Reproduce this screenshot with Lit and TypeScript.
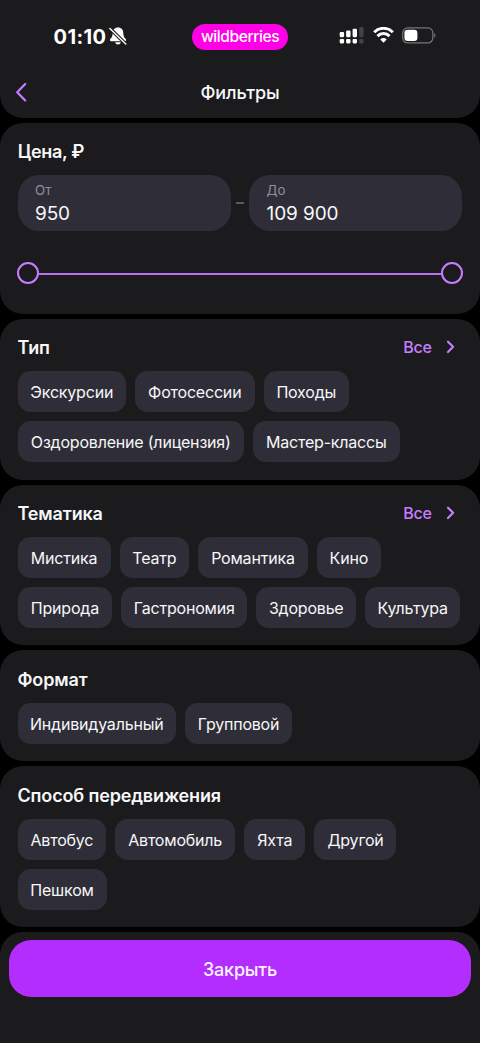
import { LitElement, html, css } from "lit";
import { customElement, property } from "lit/decorators.js";

interface Chip {
  label: string;
  width: number;
}

const chip = (label: string, width: number): Chip => ({ label, width });

const TYPES = [
  chip("Экскурсии", 108.5), chip("Фотосессии", 119.5), chip("Походы", 85.5),
  chip("Оздоровление (лицензия)", 226.5), chip("Мастер-классы", 146.5),
];
const THEMES = [
  chip("Мистика", 93), chip("Театр", 69.7), chip("Романтика", 109.5), chip("Кино", 64.3),
  chip("Природа", 94.7), chip("Гастрономия", 126), chip("Здоровье", 100), chip("Культура", 95),
];
const FORMATS = [chip("Индивидуальный", 158.5), chip("Групповой", 107)];
const TRANSPORT = [
  chip("Автобус", 88.8), chip("Автомобиль", 119.7), chip("Яхта", 61.5), chip("Другой", 82),
  chip("Пешком", 89),
];

@customElement("filter-group")
class FilterGroup extends LitElement {
  @property() heading = "";
  @property({ type: Boolean }) more = false;
  @property({ attribute: false }) chips: Chip[] = [];

  static styles = css`
    :host { display: block; box-sizing: border-box; background: #1b1b1d; border-radius: 23px; padding: 17.4px 12px 17.3px 17.5px; }
    .head { display: flex; justify-content: space-between; align-items: center; height: 24px; margin-bottom: 11.1px; }
    h2 { margin: 0; font-size: 18px; font-weight: 600; line-height: 24px; letter-spacing: -0.15px; white-space: nowrap; }
    .more { display: flex; align-items: center; gap: 14px; color: #c77dff; font-size: 16px; font-weight: 500; line-height: 24px; letter-spacing: -0.2px; margin: -2.2px 13.3px 0 0; }
    .more svg { display: block; }
    .chips { display: flex; flex-wrap: wrap; gap: 9px; }
    .chip { box-sizing: border-box; height: 41px; border-radius: 12.5px; background: #2f2e38; font-size: 16px; letter-spacing: -0.2px; line-height: 42px; white-space: nowrap; display: flex; justify-content: center; }
  `;

  render() {
    return html`
      <div class="head">
        <h2>${this.heading}</h2>
        ${this.more
          ? html`<span class="more">Все<svg width="9" height="14" viewBox="0 0 9 14"><path d="M2 1.7 7.1 6.8 2 12" fill="none" stroke="currentColor" stroke-width="2.2" stroke-linecap="round" stroke-linejoin="round"/></svg></span>`
          : null}
      </div>
      <div class="chips">
        ${this.chips.map((c) => html`<div class="chip" style="width:${c.width}px">${c.label}</div>`)}
      </div>
    `;
  }
}

@customElement("price-range")
class PriceRange extends LitElement {
  static styles = css`
    :host { display: block; box-sizing: border-box; height: 191.3px; background: #1b1b1d; border-radius: 23px; padding: 17.5px 17.7px 0; }
    h2 { margin: 0; font-size: 18px; font-weight: 600; line-height: 24px; letter-spacing: -0.3px; }
    .fields { display: flex; align-items: center; justify-content: space-between; margin-top: 11.2px; }
    .field { box-sizing: border-box; width: 213px; height: 55.7px; border-radius: 21px; background: #2f2e38; padding: 5.7px 17.3px 0; }
    .label { font-size: 13.3px; line-height: 18px; color: #8f8e99; }
    .value { font-size: 19px; line-height: 24px; margin-top: 3.4px; letter-spacing: -0.1px; }
    .dash { width: 8px; height: 1.5px; background: #59585f; }
    .slider { display: flex; align-items: center; margin: 31.2px -0.5px 0; }
    .knob { box-sizing: border-box; width: 22px; height: 22px; border: 2px solid #c77dff; border-radius: 50%; }
    .track { flex: 1; height: 2px; background: #b970ec; margin-top: 1px; }
  `;

  render() {
    return html`
      <h2>Цена, ₽</h2>
      <div class="fields">
        <div class="field"><div class="label">От</div><div class="value">950</div></div>
        <div class="dash"></div>
        <div class="field"><div class="label">До</div><div class="value">109 900</div></div>
      </div>
      <div class="slider"><div class="knob"></div><div class="track"></div><div class="knob"></div></div>
    `;
  }
}

@customElement("app-root")
class AppRoot extends LitElement {
  static styles = css`
    :host { display: flex; flex-direction: column; gap: 5px; width: 480px; height: 1043px; overflow: hidden; background: #000; color: #f7f7f9; font-family: Inter, "Liberation Sans", sans-serif; }
    svg { display: block; }
    header { box-sizing: border-box; height: 117.5px; background: #1b1b1d; border-radius: 0 0 23px 23px; flex: none; }
    .status { box-sizing: content-box; display: grid; grid-template-columns: 1fr 96px 1fr; align-items: center; height: 52px; padding-top: 11px; }
    .status > * { height: 26px; display: flex; align-items: center; }
    .clock { padding-left: 53.5px; gap: 3px; color: #fff; }
    .clock svg { margin-top: -2px; }
    .time { font-size: 20px; font-weight: 750; line-height: 24px; letter-spacing: 0.4px; margin-top: -1px; }
    .brand { justify-content: center; border-radius: 13px; background: #ff00e6; color: #fff; font-size: 15.6px; font-weight: 500; letter-spacing: -0.45px; line-height: 24px; }
    .system { justify-content: flex-end; padding-right: 44px; gap: 8.3px; margin-top: -4px; }
    .nav { display: grid; grid-template-columns: 1fr auto 1fr; align-items: center; height: 36px; margin-top: 11px; }
    .back { padding-left: 14.5px; margin-top: -1px; color: #c77dff; }
    .title { font-size: 18px; font-weight: 500; line-height: 24px; letter-spacing: -0.1px; margin-top: 2px; }
    price-range, filter-group { flex: none; }
    footer { flex: 1; background: #1b1b1d; border-radius: 23px 23px 0 0; padding: 8.4px 9px 0; }
    .close { display: block; width: 100%; height: 56.5px; border: 0; padding: 2px 0 0; border-radius: 22px; background: #b32dff; color: #fbf3ff; font: 500 18px/24px Inter, "Liberation Sans", sans-serif; letter-spacing: -0.2px; }
  `;

  render() {
    return html`
      <header>
        <div class="status">
          <div class="clock">
            <span class="time">01:10</span>
            <svg width="18" height="18" viewBox="0 0 18 18">
              <path d="M9 .6C5.600 .6 3.800 2.900 3.700 6C3.600 9.300 2.900 10.100 1.400 11.800C.5 13 .9 14.200 2.300 14.200H15.700C17.100 14.200 17.500 13 16.600 11.800C15.100 10.100 14.400 9.300 14.300 6C14.200 2.900 12.400 .6 9 .6ZM6.200 15.300C6.500 16.700 7.600 17.500 9 17.500S11.500 16.700 11.800 15.300Z" fill="#fff"/>
              <path d="M1 1.600 16.700 16.900" stroke="#1b1b1d" stroke-width="3.500"/>
              <path d="M.9 1.500 16.800 17" stroke="#fff" stroke-width="1.400" stroke-linecap="round"/>
            </svg>
          </div>
          <div class="brand">wildberries</div>
          <div class="system">
            <svg width="25" height="17" viewBox="0 0 25 17" fill="#fff">
              <rect x=".7" y="5" width="4.400" height="5.200" rx="1.100"/><rect x=".7" y="12" width="4.400" height="4.400" rx="1.100"/>
              <rect x="7.100" y="3.400" width="4.400" height="6.800" rx="1.100"/><rect x="7.100" y="12" width="4.400" height="4.400" rx="1.100"/>
              <rect x="13.600" y="1.700" width="4.400" height="8.500" rx="1.100"/><rect x="13.600" y="12" width="4.400" height="4.400" rx="1.100"/>
              <g fill="#434345"><rect x="20.200" y="0" width="4.400" height="10.200" rx="1.100"/><rect x="20.200" y="12" width="4.400" height="4.400" rx="1.100"/></g>
            </svg>
            <svg width="21" height="16" viewBox="0 0 21 16" fill="none" stroke="#fff" stroke-width="3">
              <path d="M1.200 5.200A13.200 13.200 0 0 1 19.800 5.200"/><path d="M4.500 9.100A8.400 8.400 0 0 1 16.500 9.100"/>
              <path d="M10.500 15.700 7.300 12.400A4.400 4.400 0 0 1 13.700 12.400Z" fill="#fff" stroke="none"/>
            </svg>
            <svg width="34" height="17" viewBox="0 0 34 17">
              <rect x=".7" y=".9" width="30.100" height="15" rx="4.800" fill="none" stroke="#77777a" stroke-width="1.200"/>
              <rect x="2.400" y="2.800" width="13" height="11.200" rx="3.200" fill="#fff"/>
              <path d="M32.200 6C33.700 6.600 33.700 10.200 32.200 10.800Z" fill="#77777a"/>
            </svg>
          </div>
        </div>
        <div class="nav">
          <div class="back"><svg width="12" height="20" viewBox="0 0 12 20"><path d="M10.200 2 2.200 10.200 10.200 18.400" fill="none" stroke="currentColor" stroke-width="2.200" stroke-linecap="round" stroke-linejoin="round"/></svg></div>
          <div class="title">Фильтры</div>
        </div>
      </header>
      <price-range></price-range>
      <filter-group heading="Тип" more .chips=${TYPES}></filter-group>
      <filter-group heading="Тематика" more .chips=${THEMES}></filter-group>
      <filter-group heading="Формат" .chips=${FORMATS}></filter-group>
      <filter-group heading="Способ передвижения" .chips=${TRANSPORT}></filter-group>
      <footer><button class="close">Закрыть</button></footer>
    `;
  }
}
